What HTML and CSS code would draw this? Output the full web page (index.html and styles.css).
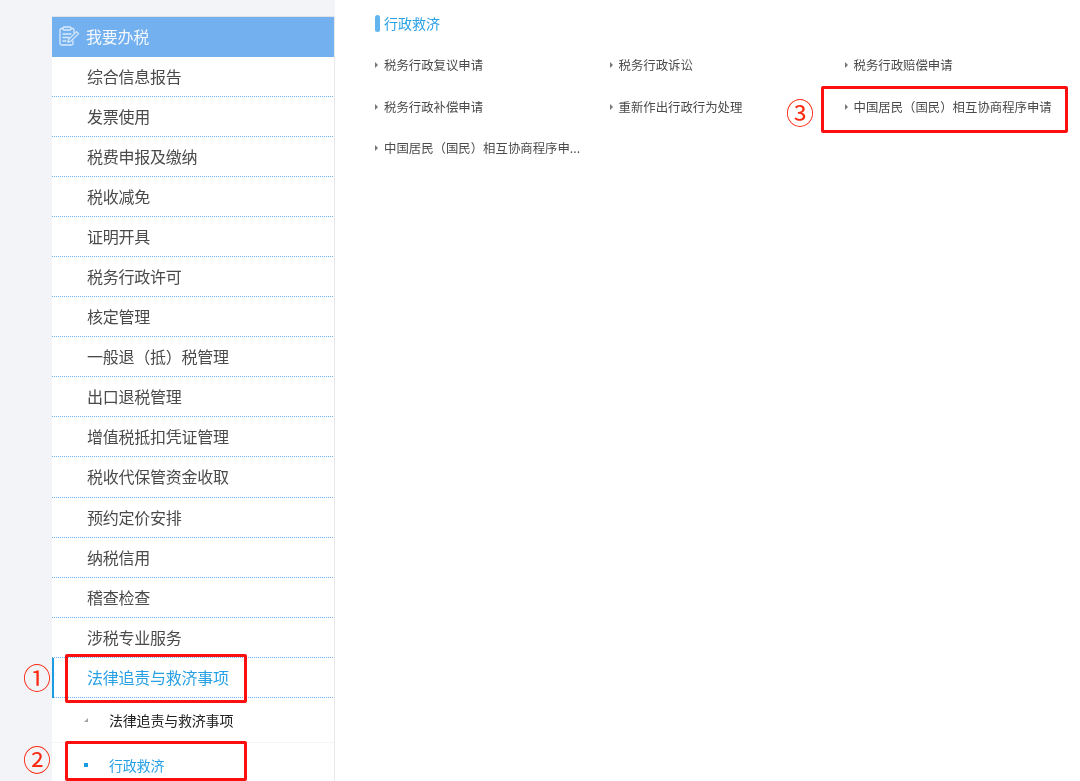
FILE: index.html
```html
<!DOCTYPE html>
<html lang="zh-CN">
<head>
<meta charset="utf-8">
<title>我要办税</title>
<link rel="stylesheet" href="styles.css">
</head>
<body>
<div class="page">
  <aside class="sidebar">
    <div class="side-head">
      <svg class="head-icon" width="22" height="22" viewBox="0 0 22 22" fill="none" stroke="#dbeafb" stroke-width="1.3" stroke-linejoin="round" stroke-linecap="round">
        <path d="M5 3.5H3.5A1.5 1.5 0 0 0 2 5v13.5A1.5 1.5 0 0 0 3.5 20h10a1.5 1.5 0 0 0 1.5-1.5V16"/>
        <path d="M13 3.5h1.5A1.5 1.5 0 0 1 16 5v3"/>
        <rect x="5" y="2" width="8" height="3" rx="1"/>
        <path d="M5 9h8M5 12.5h6M5 16h3"/>
        <path d="M10 17l.6-2.6L18.6 6.6l2 2-8 7.8z"/>
      </svg>
      <span>我要办税</span>
    </div>
    <ul class="menu">
      <li class="menu-item">综合信息报告</li>
      <li class="menu-item">发票使用</li>
      <li class="menu-item">税费申报及缴纳</li>
      <li class="menu-item">税收减免</li>
      <li class="menu-item">证明开具</li>
      <li class="menu-item">税务行政许可</li>
      <li class="menu-item">核定管理</li>
      <li class="menu-item">一般退（抵）税管理</li>
      <li class="menu-item">出口退税管理</li>
      <li class="menu-item">增值税抵扣凭证管理</li>
      <li class="menu-item">税收代保管资金收取</li>
      <li class="menu-item">预约定价安排</li>
      <li class="menu-item">纳税信用</li>
      <li class="menu-item">稽查检查</li>
      <li class="menu-item">涉税专业服务</li>
      <li class="menu-item active">法律追责与救济事项</li>
    </ul>
    <div class="sub-item sub-first"><i class="tri-corner"></i><span>法律追责与救济事项</span></div>
    <div class="sub-item sub-current"><i class="dot"></i><span>行政救济</span></div>
  </aside>
  <main class="content">
    <h2 class="title">行政救济</h2>
    <div class="links">
      <a class="link">税务行政复议申请</a>
      <a class="link">税务行政诉讼</a>
      <a class="link">税务行政赔偿申请</a>
      <a class="link">税务行政补偿申请</a>
      <a class="link">重新作出行政行为处理</a>
      <a class="link">中国居民（国民）相互协商程序申请</a>
      <a class="link">中国居民（国民）相互协商程序申...</a>
    </div>
  </main>
</div>
<div class="mark box-1"></div>
<div class="mark box-2"></div>
<div class="mark box-3"></div>
<span class="num num-1">①</span>
<span class="num num-2">②</span>
<span class="num num-3">③</span>
</body>
</html>
```
FILE: styles.css
```css
* { box-sizing: border-box; }
html, body { margin: 0; height: 100%; overflow: hidden; }
body {
  background: #f2f4f8;
  font-family: "Noto Sans CJK SC", "Liberation Sans", sans-serif;
  position: relative;
  filter: blur(0.35px);
}
.page {
  display: flex;
  height: 781px;
  padding-left: 52px;
}
.sidebar {
  width: 283px;
  margin-top: 16px;
  background: #fff;
  border-right: 1px solid #e6e8ec;
  flex: none;
}
.side-head {
  height: 41px;
  background: #73b0ef;
  border-top: 1px solid #dfe3e8;
  display: flex;
  align-items: center;
  padding: 0 0 3px 6px;
  gap: 6px;
  color: #f3f8fe;
  font-size: 16px;
  letter-spacing: -0.25px;
}
.menu { list-style: none; margin: 0; padding: 0; }
.menu-item {
  height: 40.06px;
  line-height: 39px;
  padding-left: 35px;
  font-size: 16px;
  letter-spacing: -0.25px;
  color: #4a4a4a;
  background: repeating-linear-gradient(90deg, #6db4f3 0 1px, #ffffff 1px 2px) left bottom / 100% 1px no-repeat;
}
.menu-item.active {
  color: #28a0e4;
  box-shadow: inset 2px 0 0 #1c9ce0;
}
.sub-item {
  display: flex;
  align-items: center;
  height: 45px;
  font-size: 14px;
  letter-spacing: -0.2px;
  padding-left: 32px;
  gap: 21px;
}
.sub-first { color: #222; border-bottom: 1px solid #f3f4f6; }
.sub-current { color: #28a0e4; }
.tri-corner {
  width: 0; height: 0;
  border-left: 4px solid transparent;
  border-bottom: 4px solid #a5a5a5;
}
.dot { width: 4px; height: 4px; background: #1c9ce0; }
.content {
  flex: 1;
  background: #fff;
  padding: 14px 0 0 40px;
}
.title {
  margin: 0 0 11px;
  font-size: 14px;
  line-height: 19px;
  font-weight: 400;
  color: #28a0e4;
  display: flex;
  align-items: center;
  gap: 4px;
}
.title::before {
  content: "";
  width: 5px;
  height: 17px;
  border-radius: 3px;
  background: #63b5f0;
}
.links {
  display: grid;
  grid-template-columns: 234.5px 235px 235px;
  grid-auto-rows: 41.7px;
  align-items: center;
}
.link {
  font-size: 12.4px;
  color: #4a4a4a;
  display: flex;
  align-items: center;
  gap: 6px;
  white-space: nowrap;
}
.link::before {
  content: "";
  flex: none;
  width: 0; height: 0;
  border-left: 3px solid #777;
  border-top: 3px solid transparent;
  border-bottom: 3px solid transparent;
}
.mark {
  position: absolute;
  border: 3px solid #fb0f0f;
  border-radius: 2px;
}
.box-1 { left: 65px; top: 654px; width: 182px; height: 49px; }
.box-2 { left: 65px; top: 741px; width: 182px; height: 40px; }
.box-3 { left: 821px; top: 86px; width: 247px; height: 47px; }
.num {
  position: absolute;
  color: #fb2a12;
  font-family: "Noto Sans CJK SC", sans-serif;
  font-size: 28px;
  line-height: 30px;
}
.num-1 { left: 23px; top: 662px; }
.num-2 { left: 23px; top: 744px; }
.num-3 { left: 786px; top: 97px; }
```
